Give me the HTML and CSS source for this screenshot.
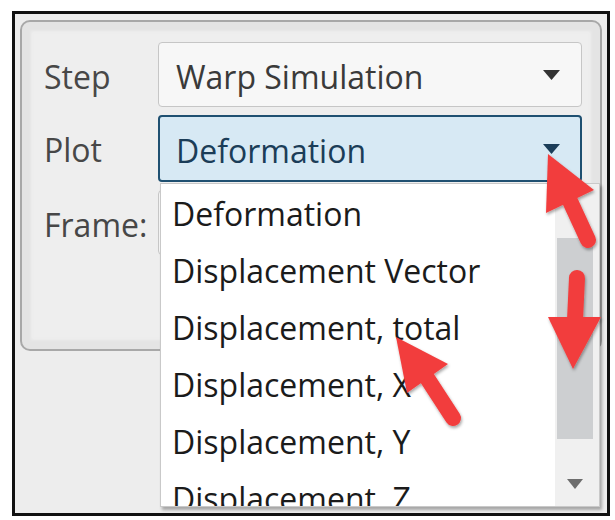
FILE: index.html
```html
<!DOCTYPE html>
<html>
<head>
<meta charset="utf-8">
<link rel="stylesheet" href="styles.css">
</head>
<body>
<div class="frame">
  <div class="panel">
    <div class="form">
      <div class="lbl">Step</div>
      <div class="combo">
        <span class="val">Warp Simulation</span>
        <svg class="caret" width="17" height="10" viewBox="0 0 17 10"><polygon points="0,0 17,0 8.5,10" fill="#333"/></svg>
      </div>
      <div class="lbl">Plot</div>
      <div class="combo-wrap">
        <div class="combo active">
          <span class="val">Deformation</span>
          <svg class="caret" width="17" height="10" viewBox="0 0 17 10"><polygon points="0,0 17,0 8.5,10" fill="#1b3d58"/></svg>
        </div>
        <div class="list">
          <div class="item">Deformation</div>
          <div class="item">Displacement Vector</div>
          <div class="item">Displacement, total</div>
          <div class="item">Displacement, X</div>
          <div class="item">Displacement, Y</div>
          <div class="item">Displacement, Z</div>
          <div class="track">
            <div class="thumb"></div>
            <svg class="down" width="16" height="10" viewBox="0 0 16 10"><polygon points="0,0 16,0 8,10" fill="#6d6d6d"/></svg>
          </div>
        </div>
      </div>
      <div class="lbl">Frame:</div>
      <div class="combo"></div>
    </div>
  </div>
</div>
<svg class="annot" width="615" height="520" viewBox="0 0 615 520">
  <defs>
    <filter id="sh" x="-20%" y="-20%" width="140%" height="140%">
      <feDropShadow dx="1" dy="2" stdDeviation="1.5" flood-color="#000" flood-opacity="0.35"/>
    </filter>
  </defs>
  <g fill="#f23e3e" stroke="#f23e3e" filter="url(#sh)">
    <g>
      <line x1="570" y1="201" x2="588" y2="240" stroke-width="16" stroke-linecap="round"/>
      <polygon points="548,154 594,190 546,213" stroke="none"/>
    </g>
    <g>
      <line x1="577" y1="278" x2="575" y2="320" stroke-width="16" stroke-linecap="round"/>
      <polygon points="548,317 601,317 573,369" stroke="none"/>
    </g>
    <g>
      <line x1="427" y1="378" x2="453" y2="418" stroke-width="16" stroke-linecap="round"/>
      <polygon points="396,337 448,364 407,393" stroke="none"/>
    </g>
  </g>
</svg>
</body>
</html>
```

FILE: styles.css
```css
html, body {
  margin: 0;
  padding: 0;
  background: #ffffff;
}
body {
  width: 615px;
  height: 520px;
  position: relative;
  overflow: hidden;
  font-family: "Open Sans", "Noto Sans", sans-serif;
}
.frame {
  box-sizing: border-box;
  margin: 11px 0 0 12px;
  width: 598px;
  height: 505px;
  border: 3px solid #111111;
  background: #ededed;
  padding: 6px 0 0 5px;
}
.panel {
  box-sizing: border-box;
  width: 582px;
  height: 331px;
  border: 2px solid #a8a8a8;
  border-radius: 10px;
  background: #eeeeee;
  box-shadow: inset 0 0 3px 9px #e4e4e4;
  padding: 20px 18px 0 22px;
}
.form {
  display: grid;
  grid-template-columns: 114px 424px;
  grid-template-rows: 65px 67px 65px;
  row-gap: 8px;
}
.lbl {
  font-size: 32px;
  line-height: 40px;
  color: #474747;
  padding-top: 15px;
}
.combo {
  box-sizing: border-box;
  height: 65px;
  border: 1px solid #c6c6c6;
  border-radius: 4px;
  background: #f7f7f7;
  padding: 14px 21px 0 17px;
  display: flex;
  justify-content: space-between;
  font-size: 32px;
  line-height: 40px;
  color: #3a3a3a;
}
.caret {
  margin-top: 13px;
}
.combo-wrap {
  position: relative;
}
.combo.active {
  height: 67px;
  border: 2px solid #1f5071;
  background: #d7e9f4;
  color: #1b3d58;
  padding: 14px 20px 0 16px;
}
.list {
  position: absolute;
  top: 68px;
  left: 2px;
  width: 440px;
  height: 324px;
  box-sizing: border-box;
  border: 1px solid #c9c9c9;
  background: #ffffff;
  box-shadow: 2px 3px 3px rgba(0, 0, 0, 0.3);
  overflow: hidden;
  z-index: 2;
}
.item {
  font-size: 32px;
  line-height: 57px;
  color: #1b1b1b;
  padding-left: 11px;
  white-space: nowrap;
}
.item:first-child {
  margin-top: 1px;
}
.track {
  position: absolute;
  top: 0;
  right: 0;
  bottom: 0;
  width: 44px;
  background: #f0f0f0;
}
.thumb {
  position: absolute;
  top: 54px;
  left: 2px;
  width: 36px;
  height: 201px;
  background: #cdcfd1;
}
.down {
  position: absolute;
  left: 12px;
  top: 295px;
}
.annot {
  position: absolute;
  left: 0;
  top: 0;
  pointer-events: none;
  z-index: 5;
}
```
